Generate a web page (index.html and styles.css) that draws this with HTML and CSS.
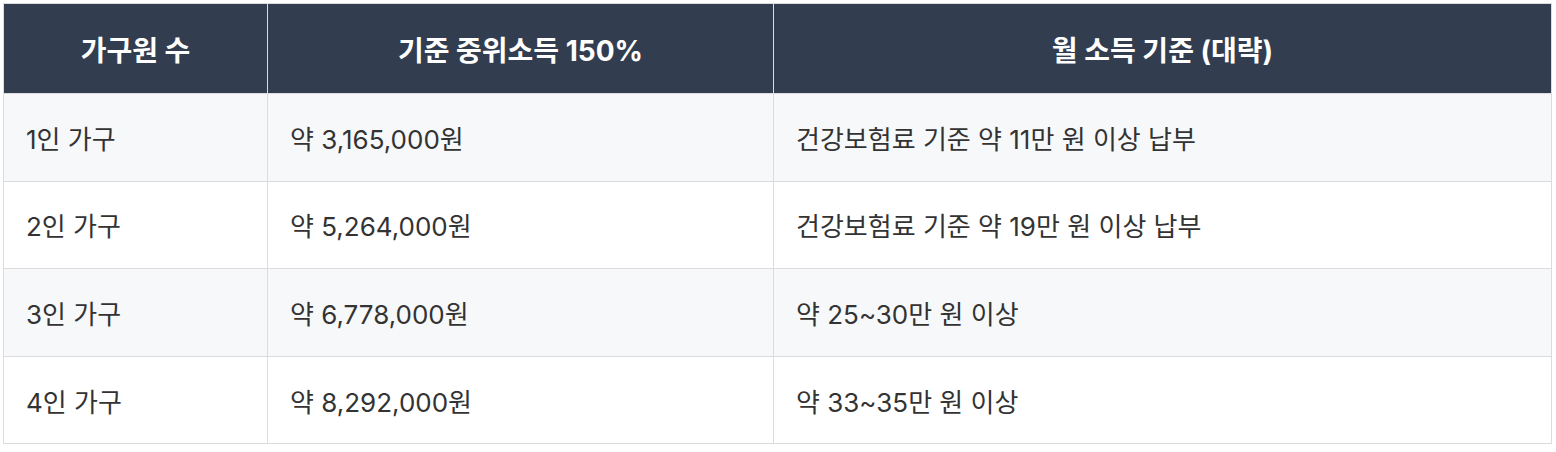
FILE: index.html
```html
<!DOCTYPE html>
<html lang="ko">
<head>
<meta charset="utf-8">
<link rel="stylesheet" href="styles.css">
</head>
<body>
<div class="wrap">
<table class="income-table">
  <thead>
    <tr>
      <th class="c1">가구원 수</th>
      <th class="c2">기준 중위소득 150%</th>
      <th class="c3">월 소득 기준 (대략)</th>
    </tr>
  </thead>
  <tbody>
    <tr><td>1인 가구</td><td>약 3,165,000원</td><td>건강보험료 기준 약 11만 원 이상 납부</td></tr>
    <tr><td>2인 가구</td><td>약 5,264,000원</td><td>건강보험료 기준 약 19만 원 이상 납부</td></tr>
    <tr><td>3인 가구</td><td>약 6,778,000원</td><td>약 25~30만 원 이상</td></tr>
    <tr><td>4인 가구</td><td>약 8,292,000원</td><td>약 33~35만 원 이상</td></tr>
  </tbody>
</table>
</div>
</body>
</html>
```
FILE: styles.css
```css
html, body {
  margin: 0;
  padding: 0;
  background: #ffffff;
}
.wrap {
  padding: 3px 4px 0 3px;
}
.income-table {
  width: 100%;
  border-collapse: collapse;
  font-family: Inter, "Noto Sans CJK KR", sans-serif;
  font-size: 26px;
  color: #333333;
  table-layout: fixed;
}
.income-table th,
.income-table td {
  box-sizing: border-box;
  border: 1px solid #dcdcdf;
}
.c1 { width: 264px; }
.c2 { width: 506px; }
.income-table th {
  background: #323e50;
  color: #ffffff;
  font-size: 28px;
  font-weight: 700;
  text-align: center;
  height: 90px;
  padding: 0 22px;
}
.income-table td {
  height: 87.6px;
  padding: 0 22px;
  text-align: left;
  font-weight: 400;
}
.income-table tbody tr:nth-child(odd) td {
  background: #f7f8fa;
}
.income-table tbody tr:nth-child(even) td {
  background: #ffffff;
}
```
